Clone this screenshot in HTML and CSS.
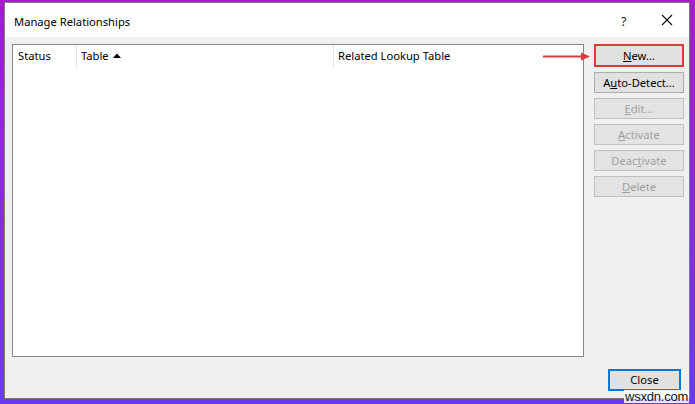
FILE: index.html
```html
<!DOCTYPE html>
<html>
<head>
<meta charset="utf-8">
<link rel="stylesheet" href="styles.css">
</head>
<body>
<div class="dialog">
  <div class="titlebar">
    <span class="title">Manage Relationships</span>
    <span class="help">?</span>
    <span class="close-x">
      <svg width="12" height="12" viewBox="0 0 12 12"><path d="M1 1 L11 11 M11 1 L1 11" stroke="#111" stroke-width="1.1" fill="none"/></svg>
    </span>
  </div>
  <div class="content">
    <div class="main">
      <div class="listbox">
        <div class="header">
          <div class="col col-status">Status</div>
          <div class="col col-table">Table <svg class="sort" width="8" height="5" viewBox="0 0 8 5"><path d="M0 5 L4 0.5 L8 5 Z" fill="#000"/></svg></div>
          <div class="col col-related">Related Lookup Table</div>
        </div>
      </div>
      <div class="buttons">
        <button class="btn btn-new"><u>N</u>ew...</button>
        <button class="btn">A<u>u</u>to-Detect...</button>
        <button class="btn disabled"><u>E</u>dit...</button>
        <button class="btn disabled"><u>A</u>ctivate</button>
        <button class="btn disabled">Deac<u>t</u>ivate</button>
        <button class="btn disabled"><u>D</u>elete</button>
      </div>
    </div>
    <div class="footer">
      <button class="btn btn-close">Close</button>
    </div>
  </div>
  <div class="arrow">
    <svg width="48" height="9" viewBox="0 0 48 9"><path d="M0 4.5 H40" stroke="#e0393c" stroke-width="2"/><path d="M38 0.5 L47 4.5 L38 8.5 Z" fill="#e0393c"/></svg>
  </div>
</div>
<div class="watermark">wsxdn.com</div>
</body>
</html>
```

FILE: styles.css
```css
html, body {
  margin: 0;
  padding: 0;
}
body {
  width: 695px;
  height: 404px;
  overflow: hidden;
  background: linear-gradient(180deg, #a41dc8 0%, #8a2ad8 50%, #6a3af2 100%);
  font-family: "Noto Sans", "Open Sans", sans-serif;
  font-size: 11.2px;
  color: #000;
  position: relative;
}
.dialog {
  position: relative;
  box-sizing: border-box;
  margin: 2px 0 0 4px;
  width: 686px;
  height: 397px;
  border: 1px solid #7c7c7c;
  background: #f0f0f0;
  display: flex;
  flex-direction: column;
}
.titlebar {
  height: 34px;
  background: #ffffff;
  display: flex;
  align-items: center;
  padding-left: 9px;
  flex-shrink: 0;
}
.title {
  font-size: 11.2px;
  flex: 1;
  padding-top: 3px;
}
.help {
  font-size: 12.5px;
  width: 12px;
  margin-right: 28px;
  padding-top: 2px;
  color: #222;
}
.close-x {
  width: 12px;
  height: 12px;
  margin-right: 16px;
  display: flex;
}
.content {
  flex: 1;
  display: flex;
  flex-direction: column;
  padding: 7px 5px 0 7px;
}
.main {
  display: flex;
  gap: 10px;
}
.listbox {
  box-sizing: border-box;
  width: 572px;
  height: 313px;
  background: #fff;
  border: 1px solid #828790;
}
.header {
  display: flex;
  height: 23px;
}
.col {
  box-sizing: border-box;
  height: 23px;
  line-height: 22px;
  padding-left: 5px;
  border-right: 1px solid #e5e5e5;
  white-space: nowrap;
}
.col-status { width: 64px; }
.col-table { width: 257px; padding-left: 4px; }
.col-related { border-right: none; padding-left: 4px; }
.sort {
  vertical-align: 2px;
  margin-left: 1px;
}
.buttons {
  display: flex;
  flex-direction: column;
  gap: 5px;
  width: 90px;
}
.btn {
  box-sizing: border-box;
  width: 90px;
  height: 21px;
  background: #e1e1e1;
  border: 1px solid #adadad;
  font-family: "Noto Sans", "Open Sans", sans-serif;
  font-size: 11.2px;
  color: #000;
  padding: 0;
  line-height: 18px;
}
.btn u {
  text-underline-offset: 1px;
}
.btn-new {
  border: 2px solid #e0393c;
  height: 23px;
}
.disabled {
  color: #a0a0a0;
  border-color: #bfbfbf;
  background: #e3e3e3;
}
.footer {
  display: flex;
  justify-content: flex-end;
  padding-top: 12px;
  padding-right: 3px;
}
.btn-close {
  width: 73px;
  height: 22px;
  border: 2px solid #0078d7;
}
.arrow {
  position: absolute;
  left: 538px;
  top: 49px;
  width: 48px;
  height: 9px;
}
.arrow svg { display: block; }
.watermark {
  position: absolute;
  left: 624px;
  top: 390px;
  font-family: "Liberation Sans", sans-serif;
  font-size: 13px;
  color: #111;
  background: rgba(255,255,255,0.85);
  padding: 0 1px;
  line-height: 13px;
  letter-spacing: -0.2px;
}
```
